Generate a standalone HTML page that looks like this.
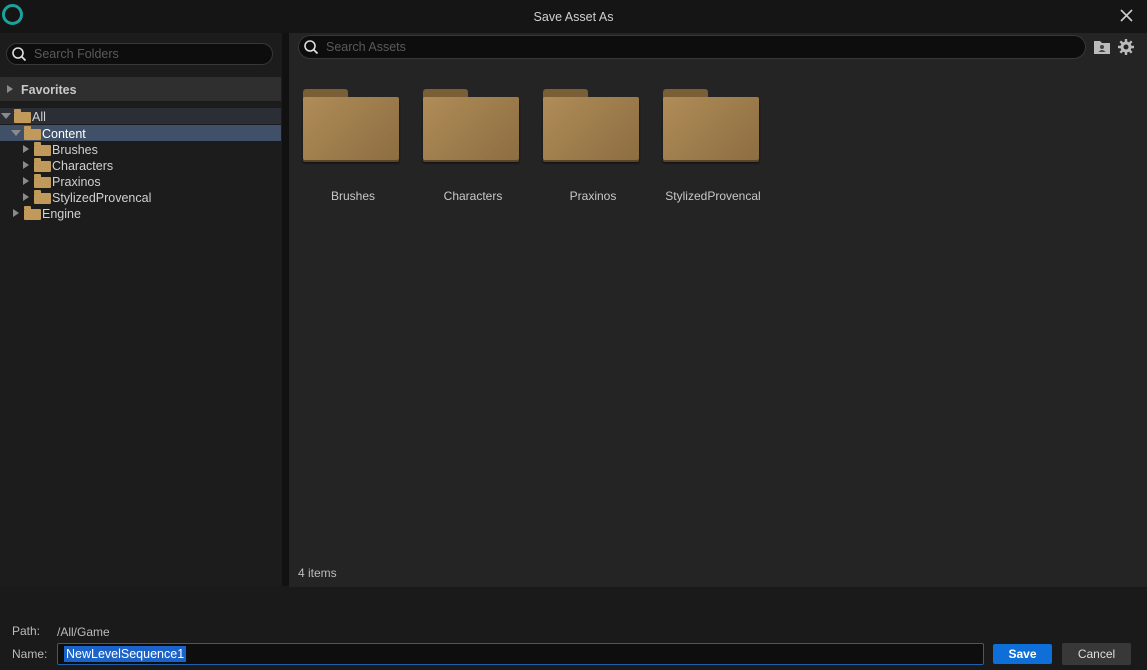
<!DOCTYPE html><html><head><style>
*{margin:0;padding:0;box-sizing:border-box}
body{width:1147px;height:670px;background:#1a1a1a;font-family:"Liberation Sans",sans-serif;font-size:12px;color:#c0c0c0;position:relative;overflow:hidden}
.a{position:absolute}
.row{position:absolute;left:0;width:281px;height:16px;line-height:18px;font-size:12.5px;color:#d0d0d0}
.tri{position:absolute;width:0;height:0}
.tr{border-top:4px solid transparent;border-bottom:4px solid transparent;border-left:6px solid #8a8a8a}
.td{border-left:5px solid transparent;border-right:5px solid transparent;border-top:6px solid #8a8a8a}
.sf{position:absolute;width:17px;height:11px;background:#c19a5b;border-radius:1px}
.sf:before{content:"";position:absolute;left:0;top:-3px;width:7px;height:3px;background:#c19a5b;border-radius:1px 1px 0 0}
.big{position:absolute;top:89px;width:96px;height:73px}
.big .tab{position:absolute;left:0;top:0;width:45px;height:14px;background:#7a5f36;border-radius:3px 3px 0 0}
.big .bd{position:absolute;left:0;top:8px;width:96px;height:63px;background:linear-gradient(135deg,#b08c57,#8c6e42);border-radius:2px;box-shadow:0 2px 0 #5a4527,0 3px 2px #0c0c0c}
.lbl{position:absolute;top:189px;width:120px;text-align:center;font-size:12px;color:#c8c8c8}
</style></head><body>
<div class="a" style="left:0;top:0;width:1147px;height:33px;background:#151515"></div>
<div class="a" style="left:2px;top:4px;width:21px;height:21px;border:3px solid #1aa39a;border-radius:50%"></div>
<div class="a" style="left:0;top:10px;width:1147px;text-align:center;font-size:12.5px;color:#d0d0d0">Save Asset As</div>
<svg class="a" style="left:1119px;top:8px" width="15" height="15"><path d="M2 2L13 13M13 2L2 13" stroke="#ccc" stroke-width="1.6"/></svg>
<div class="a" style="left:0;top:33px;width:282px;height:553px;background:#1c1c1c"></div>
<div class="a" style="left:282px;top:33px;width:7px;height:553px;background:#111"></div>
<div class="a" style="left:6px;top:43px;width:267px;height:22px;background:#0d0d0d;border:1px solid #383838;border-radius:11px"></div>
<svg class="a" style="left:11px;top:46px" width="16" height="16"><circle cx="7" cy="7" r="5" stroke="#ddd" stroke-width="1.6" fill="none"/><path d="M10.5 10.5L14.5 14.5" stroke="#ddd" stroke-width="1.8"/></svg>
<div class="a" style="left:34px;top:47px;font-size:12.5px;color:#5a5a5a">Search Folders</div>
<div class="a" style="left:0;top:77px;width:281px;height:24px;background:#2f2f2f"></div>
<div class="tri tr" style="left:7px;top:85px"></div>
<div class="a" style="left:21px;top:83px;font-size:12.5px;font-weight:bold;color:#c8c8c8">Favorites</div>
<div class="row" style="top:108px;background:#2b2f35"><div class="tri td" style="left:1px;top:5px"></div><div class="sf" style="left:14px;top:4px"></div><span style="position:absolute;left:32px">All</span></div>
<div class="row" style="top:125px;background:#3f5068;color:#fff"><div class="tri td" style="left:11px;top:5px"></div><div class="sf" style="left:24px;top:4px"></div><span style="position:absolute;left:42px">Content</span></div>
<div class="row" style="top:141px"><div class="tri tr" style="left:23px;top:4px"></div><div class="sf" style="left:34px;top:4px"></div><span style="position:absolute;left:52px">Brushes</span></div>
<div class="row" style="top:157px"><div class="tri tr" style="left:23px;top:4px"></div><div class="sf" style="left:34px;top:4px"></div><span style="position:absolute;left:52px">Characters</span></div>
<div class="row" style="top:173px"><div class="tri tr" style="left:23px;top:4px"></div><div class="sf" style="left:34px;top:4px"></div><span style="position:absolute;left:52px">Praxinos</span></div>
<div class="row" style="top:189px"><div class="tri tr" style="left:23px;top:4px"></div><div class="sf" style="left:34px;top:4px"></div><span style="position:absolute;left:52px">StylizedProvencal</span></div>
<div class="row" style="top:205px"><div class="tri tr" style="left:13px;top:4px"></div><div class="sf" style="left:24px;top:4px"></div><span style="position:absolute;left:42px">Engine</span></div>
<div class="a" style="left:289px;top:33px;width:858px;height:554px;background:#242424"></div>
<div class="a" style="left:298px;top:35px;width:788px;height:24px;background:#0d0d0d;border:1px solid #383838;border-radius:12px"></div>
<svg class="a" style="left:303px;top:39px" width="16" height="16"><circle cx="7" cy="7" r="5" stroke="#ddd" stroke-width="1.6" fill="none"/><path d="M10.5 10.5L14.5 14.5" stroke="#ddd" stroke-width="1.8"/></svg>
<div class="a" style="left:326px;top:40px;font-size:12.5px;color:#5a5a5a">Search Assets</div>
<svg class="a" style="left:1093px;top:39px" width="18" height="16"><path d="M1 2h6l2 2h8v11H1z" fill="#bbb"/><circle cx="9" cy="8" r="2" fill="#444"/><path d="M5.5 13q3.5-4 7 0z" fill="#444"/></svg>
<svg class="a" style="left:1117px;top:38px" width="18" height="18"><g stroke="#bbb" stroke-width="2.4"><path d="M9 1v16M1 9h16M3.3 3.3l11.4 11.4M14.7 3.3L3.3 14.7"/></g><circle cx="9" cy="9" r="5.5" fill="#bbb"/><circle cx="9" cy="9" r="2.5" fill="#242424"/></svg>
<div class="big" style="left:303px"><div class="tab"></div><div class="bd"></div></div>
<div class="big" style="left:423px"><div class="tab"></div><div class="bd"></div></div>
<div class="big" style="left:543px"><div class="tab"></div><div class="bd"></div></div>
<div class="big" style="left:663px"><div class="tab"></div><div class="bd"></div></div>
<div class="lbl" style="left:293px">Brushes</div>
<div class="lbl" style="left:413px">Characters</div>
<div class="lbl" style="left:533px">Praxinos</div>
<div class="lbl" style="left:653px">StylizedProvencal</div>
<div class="a" style="left:298px;top:566px;color:#bbb">4 items</div>
<div class="a" style="left:12px;top:624px;color:#bbb">Path:</div>
<div class="a" style="left:57px;top:625px;color:#bbb">/All/Game</div>
<div class="a" style="left:12px;top:647px;color:#bbb">Name:</div>
<div class="a" style="left:57px;top:643px;width:927px;height:22px;background:#0e0e0e;border:1px solid #1e5fa8;border-radius:2px"></div>
<div class="a" style="left:64px;top:646px;height:16px;padding:0 2px;background:#1b63c9;color:#fff;font-size:12.5px;line-height:16px">NewLevelSequence1</div>
<div class="a" style="left:993px;top:644px;width:59px;height:20px;background:#0f6fd8;border-radius:2px;color:#fff;font-weight:bold;text-align:center;line-height:20px">Save</div>
<div class="a" style="left:1062px;top:643px;width:69px;height:22px;background:#383838;border-radius:2px;color:#ddd;text-align:center;line-height:22px">Cancel</div>
</body></html>
